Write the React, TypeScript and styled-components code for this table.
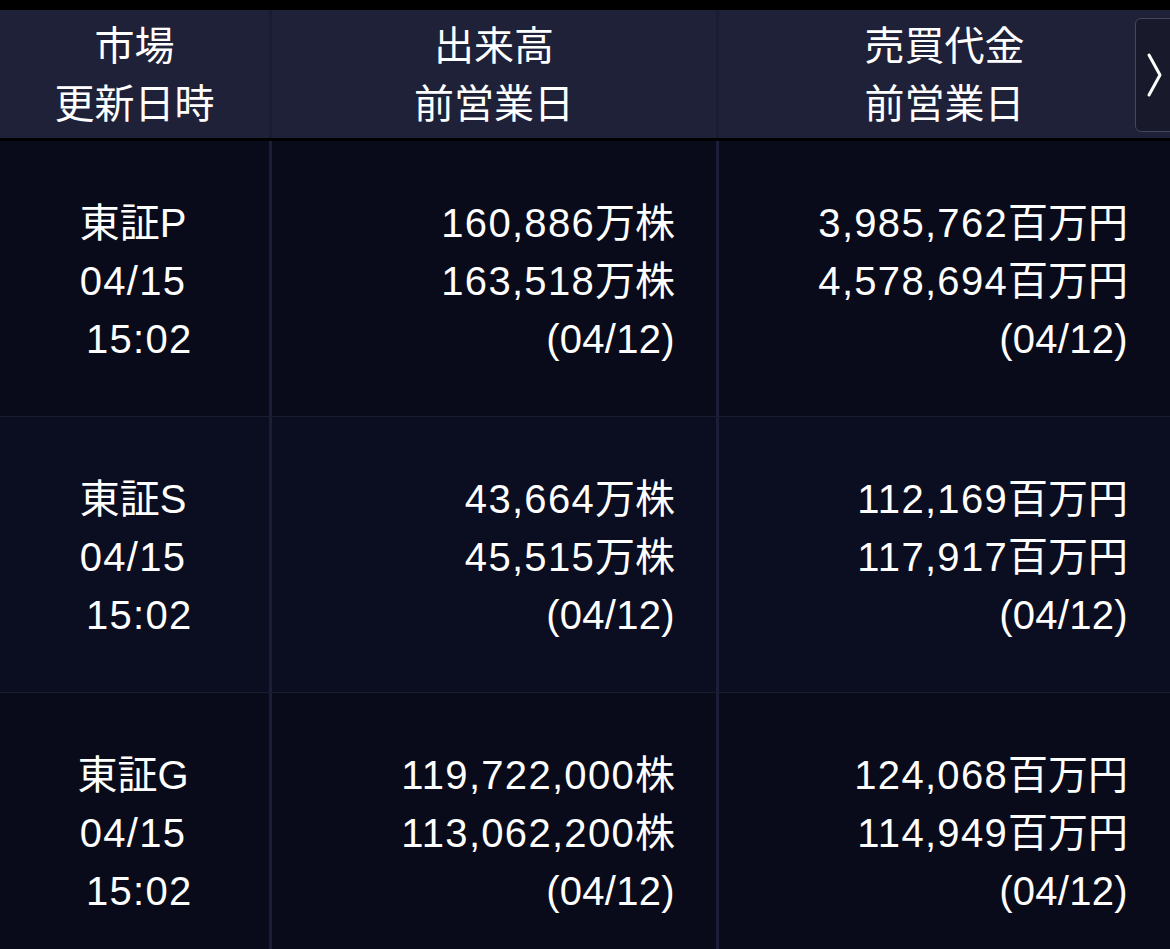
import React from "react";
import styled, { createGlobalStyle } from "styled-components";

const GlobalStyle = createGlobalStyle`
  html, body {
    margin: 0;
    padding: 0;
    background: #0a0c1b;
  }
  body {
    font-family: "Liberation Sans", "Noto Sans CJK JP", sans-serif;
    color: #ffffff;
    overflow: hidden;
  }
`;

const Page = styled.div`
  display: flex;
  flex-direction: column;
  width: 1170px;
  height: 949px;
  overflow: hidden;
  background: #0a0c1b;
`;

const TopBar = styled.div`
  height: 10px;
  background: #000000;
  flex-shrink: 0;
`;

const Header = styled.div`
  position: relative;
  display: grid;
  grid-template-columns: 272px 447px 1fr;
  height: 128px;
  background: #1f2139;
  border-bottom: 3px solid #000000;
  flex-shrink: 0;
`;

const HeaderCell = styled.div<{ $last?: boolean }>`
  display: flex;
  flex-direction: column;
  align-items: center;
  justify-content: center;
  font-size: 40px;
  line-height: 58px;
  box-sizing: border-box;
  border-right: ${(p) => (p.$last ? "none" : "3px solid #1a1c32")};
  padding-top: 2px;
`;

const NextButton = styled.div`
  position: absolute;
  top: 8px;
  right: -8px;
  width: 43px;
  height: 114px;
  border: 1px solid #45485b;
  border-radius: 6px;
  background: #181a2b;
  display: flex;
  align-items: center;
  padding-left: 10px;
  box-sizing: border-box;
`;

const Row = styled.div<{ $alt?: boolean }>`
  display: grid;
  grid-template-columns: 272px 447px 1fr;
  height: 275px;
  border-bottom: 1px solid #1a1d31;
  flex-shrink: 0;
  background: ${(p) => (p.$alt ? "#0b0d20" : "#090b1a")};
`;

const Cell = styled.div<{ $align: "center" | "right"; $last?: boolean }>`
  display: flex;
  flex-direction: column;
  justify-content: center;
  align-items: ${(p) => (p.$align === "center" ? "center" : "flex-end")};
  padding-right: ${(p) => (p.$align === "right" ? (p.$last ? "42px" : "41px") : "3px")};
  font-size: 40px;
  line-height: 58px;
  white-space: pre;
  border-right: ${(p) => (p.$last ? "none" : "3px solid #1b1e36")};
  box-sizing: border-box;
  padding-top: 5px;
`;

const Num = styled.span<{ $tight?: boolean }>`
  letter-spacing: ${(p) => (p.$tight ? "0.3px" : "1.3px")};
`;

const Line = styled.span`
  display: block;
`;

type RowData = {
  market: string;
  mark: string;
  date: string;
  time: string;
  vol: [string, string];
  volUnit: string;
  value: [string, string];
  prev: string;
};

const rows: RowData[] = [
  {
    market: "東証",
    mark: "P",
    date: "04/15",
    time: " 15:02",
    vol: ["160,886", "163,518"],
    volUnit: "万株",
    value: ["3,985,762", "4,578,694"],
    prev: "(04/12)",
  },
  {
    market: "東証",
    mark: "S",
    date: "04/15",
    time: " 15:02",
    vol: ["43,664", "45,515"],
    volUnit: "万株",
    value: ["112,169", "117,917"],
    prev: "(04/12)",
  },
  {
    market: "東証",
    mark: "G",
    date: "04/15",
    time: " 15:02",
    vol: ["119,722,000", "113,062,200"],
    volUnit: "株",
    value: ["124,068", "114,949"],
    prev: "(04/12)",
  },
];

export default function App() {
  return (
    <Page>
      <GlobalStyle />
      <TopBar />
      <Header>
        <HeaderCell>
          <span>市場</span>
          <span>更新日時</span>
        </HeaderCell>
        <HeaderCell>
          <span>出来高</span>
          <span>前営業日</span>
        </HeaderCell>
        <HeaderCell $last>
          <span>売買代金</span>
          <span>前営業日</span>
        </HeaderCell>
        <NextButton>
          <svg width="18" height="46" viewBox="0 0 18 46">
            <polyline
              points="3,3 14,23 3,43"
              fill="none"
              stroke="#ffffff"
              strokeWidth="3"
              strokeLinecap="round"
              strokeLinejoin="round"
            />
          </svg>
        </NextButton>
      </Header>
      {rows.map((r, i) => (
        <Row key={r.mark} $alt={i === 1}>
          <Cell $align="center">
            <Line>
              {r.market}
              {r.mark}
            </Line>
            <Line>
              <Num>{r.date}</Num>
            </Line>
            <Line>
              <Num>{r.time}</Num>
            </Line>
          </Cell>
          <Cell $align="right">
            <Line>
              <Num>{r.vol[0]}</Num>
              {r.volUnit}
            </Line>
            <Line>
              <Num>{r.vol[1]}</Num>
              {r.volUnit}
            </Line>
            <Line>
              <Num $tight>{r.prev}</Num>
            </Line>
          </Cell>
          <Cell $align="right" $last>
            <Line>
              <Num>{r.value[0]}</Num>
              百万円
            </Line>
            <Line>
              <Num>{r.value[1]}</Num>
              百万円
            </Line>
            <Line>
              <Num $tight>{r.prev}</Num>
            </Line>
          </Cell>
        </Row>
      ))}
    </Page>
  );
}
